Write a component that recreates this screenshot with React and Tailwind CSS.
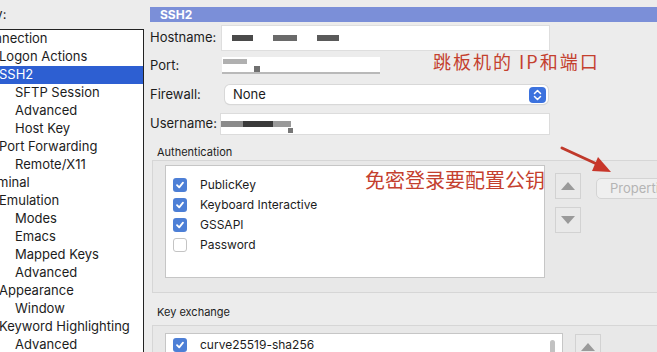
import React from "react";

const tree = [
  { label: "Connection", level: 0 },
  { label: "Logon Actions", level: 1 },
  { label: "SSH2", level: 1, selected: true },
  { label: "SFTP Session", level: 2 },
  { label: "Advanced", level: 2 },
  { label: "Host Key", level: 2 },
  { label: "Port Forwarding", level: 1 },
  { label: "Remote/X11", level: 2 },
  { label: "Terminal", level: 0 },
  { label: "Emulation", level: 1 },
  { label: "Modes", level: 2 },
  { label: "Emacs", level: 2 },
  { label: "Mapped Keys", level: 2 },
  { label: "Advanced", level: 2 },
  { label: "Appearance", level: 1 },
  { label: "Window", level: 2 },
  { label: "Keyword Highlighting", level: 1 },
  { label: "Advanced", level: 2 },
];

const auth = [
  { label: "PublicKey", checked: true },
  { label: "Keyboard Interactive", checked: true },
  { label: "GSSAPI", checked: true },
  { label: "Password", checked: false },
];

function Checkbox({ checked }) {
  if (!checked)
    return (
      <span className="h-[14px] w-[14px] shrink-0 rounded-[3px] border border-[#c4c4c4] bg-white"></span>
    );
  return (
    <span className="flex h-[14px] w-[14px] shrink-0 items-center justify-center rounded-[3px] bg-[#4d7fd6]">
      <svg width="10" height="10" viewBox="0 0 10 10">
        <path d="M2 5.2 L4.2 7.4 L8 2.6" fill="none" stroke="white" strokeWidth="1.8" strokeLinecap="round" strokeLinejoin="round" />
      </svg>
    </span>
  );
}

function ArrowButton({ down }) {
  return (
    <div className="flex h-[26px] w-[26px] items-center justify-center border border-[#d2d2d2] bg-[#e9e9e9]">
      <svg width="14" height="10" viewBox="0 0 14 10">
        <path d={down ? "M0 1 L14 1 L7 9 Z" : "M0 9 L14 9 L7 1 Z"} fill="#9a9a9a" />
      </svg>
    </div>
  );
}

function Blur({ w, h = 6, c = "#555" }) {
  return <span className="block" style={{ width: w, height: h, background: c }}></span>;
}

export default function App() {
  return (
    <div className="relative flex h-[352px] w-[657px] overflow-hidden bg-[#ececec] font-['Inter','Noto_Sans',sans-serif] text-[#1c1c1c]">
      {/* Category tree */}
      <div className="flex w-[150px] shrink-0 flex-col">
        <div className="flex h-[29px] shrink-0 items-center">
          <span className="ml-[-54px] text-[13px]">Category:</span>
        </div>
        <div className="flex-1 w-[144px] overflow-hidden border-t border-r border-[#222] bg-white">
          {tree.map((t, i) => (
            <div
              key={i}
              className={`flex h-[18px] items-center whitespace-nowrap text-[13px] ${t.selected ? "bg-[#2d5fd2] text-white" : ""}`}
            >
              <span
                className={
                  t.level === 0 ? "ml-[-23px]" : t.level === 1 ? "ml-[-1px]" : "ml-[15px]"
                }
              >
                {t.label}
              </span>
            </div>
          ))}
        </div>
      </div>

      {/* SSH2 page */}
      <div className="flex flex-1 flex-col pt-[7px]">
        <div className="flex h-[15px] shrink-0 items-center bg-[#7b8fd8] pl-[10px] text-[12px] font-bold text-white">
          SSH2
        </div>

        <div className="mt-[3px] flex h-[26px] shrink-0 items-center text-[13px]">
          <span className="w-[71px]">Hostname:</span>
          <div className="flex h-full w-[329px] items-center gap-[20px] border border-[#dedede] bg-white pl-[10px]">
            <Blur w={21} c="#4a4a4a" />
            <Blur w={24} c="#6a6a6a" />
            <Blur w={22} c="#5a5a5a" />
          </div>
        </div>

        <div className="mt-[6px] flex h-[17px] shrink-0 items-center text-[13px]">
          <span className="w-[72px]">Port:</span>
          <div className="relative h-full w-[158px] border-b-2 border-[#b9b9b9] bg-white">
            <span className="absolute left-[1px] top-[2px]"><Blur w={24} h={5} c="#b0b0b0" /></span>
            <span className="absolute left-[32px] top-[9px]"><Blur w={6} h={6} c="#707070" /></span>
          </div>
        </div>

        <div className="mt-[11px] flex h-[19px] shrink-0 items-center text-[13px]">
          <span className="w-[75px]">Firewall:</span>
          <div className="flex h-full w-[323px] items-center justify-between rounded-[5px] bg-white pl-[8px] pr-[2px] shadow-[0_0_0_1px_#d8d8d8,0_1px_1px_#c8c8c8]">
            <span>None</span>
            <span className="flex h-[16px] w-[17px] items-center justify-center rounded-[4px] bg-[#3c72de]">
              <svg width="9" height="12" viewBox="0 0 9 12">
                <path d="M1.5 4.5 L4.5 1.5 L7.5 4.5 M1.5 7.5 L4.5 10.5 L7.5 7.5" fill="none" stroke="white" strokeWidth="1.5" strokeLinecap="round" strokeLinejoin="round" />
              </svg>
            </span>
          </div>
        </div>

        <div className="mt-[9px] flex h-[22px] shrink-0 items-center text-[13px]">
          <span className="w-[70px]">Username:</span>
          <div className="relative h-full w-[330px] border border-[#dcdcdc] bg-white">
            <span className="absolute left-0 top-[7px] flex">
              <Blur w={22} c="#8a8a8a" />
              <Blur w={30} c="#3a3a3a" />
              <Blur w={18} c="#9a9a9a" />
            </span>
            <span className="absolute left-[67px] top-[14px]"><Blur w={5} h={5} c="#777" /></span>
          </div>
        </div>

        <div className="mt-[10px] flex h-[14px] shrink-0 items-center pl-[7px] text-[11px]">Authentication</div>

        <div className="ml-[2px] mt-[1px] flex h-[133px] shrink-0 border-y border-l border-[#d6d6d6] bg-[#e8e8e8] pl-[12px] pt-[4px]">
          <div className="flex h-[113px] w-[380px] flex-col border border-[#c6c6c6] bg-white pl-[7px] pt-[9px]">
            {auth.map((a) => (
              <div key={a.label} className="flex h-[20px] items-center gap-[13px] text-[12px]">
                <Checkbox checked={a.checked} />
                <span>{a.label}</span>
              </div>
            ))}
          </div>
          <div className="ml-[10px] flex flex-col gap-[8px] pt-[8px]">
            <ArrowButton />
            <ArrowButton down />
          </div>
          <div className="ml-[15px] pt-[13px]">
            <div className="flex h-[21px] w-[80px] items-center whitespace-nowrap rounded-[5px] border border-[#d4d4d4] bg-[#efefef] pl-[13px] text-[13px] text-[#b4b4b4]">
              Properties...
            </div>
          </div>
        </div>

        <div className="mt-[12px] flex h-[14px] shrink-0 items-center pl-[7px] text-[11px]">Key exchange</div>

        <div className="ml-[2px] mt-[6px] flex flex-1 border-t border-l border-[#d6d6d6] bg-[#e8e8e8] pl-[12px] pt-[7px]">
          <div className="relative flex w-[398px] flex-col border border-[#c6c6c6] bg-white pl-[7px] pt-[1px]">
            <div className="flex h-[20px] items-center gap-[13px] text-[12px]">
              <Checkbox checked />
              <span>curve25519-sha256</span>
            </div>
            <span className="absolute right-[7px] top-[6px] h-[40px] w-[5px] rounded-full bg-[#c2c2c2]"></span>
          </div>
          <div className="ml-[12px] pt-[1px]">
            <ArrowButton />
          </div>
        </div>
      </div>

      {/* Red annotations over the dialog */}
      <span className="absolute left-[433px] top-[49px] whitespace-nowrap font-['Noto_Sans_CJK_SC',sans-serif] text-[18px] leading-[24px] tracking-[2px] text-[#c4402e]">
        跳板机的 IP和端口
      </span>
      <span className="absolute left-[365px] top-[167px] whitespace-nowrap font-['Noto_Sans_CJK_SC',sans-serif] text-[20px] leading-[26px] text-[#c4402e]">
        免密登录要配置公钥
      </span>
      <svg className="absolute left-[555px] top-[143px]" width="62" height="35" viewBox="0 0 62 35">
        <line x1="7" y1="5" x2="44" y2="22" stroke="#c0392b" strokeWidth="3" strokeLinecap="round" />
        <polygon points="56,29 43,14 37,28" fill="#c8362a" />
      </svg>
    </div>
  );
}
